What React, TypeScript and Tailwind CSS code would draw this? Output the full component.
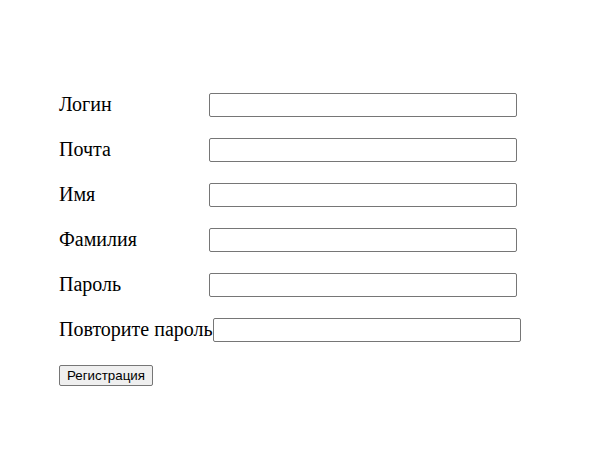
export default function App() {
  const fields = [
    { label: "Логин", type: "text" },
    { label: "Почта", type: "email" },
    { label: "Имя", type: "text" },
    { label: "Фамилия", type: "text" },
    { label: "Пароль", type: "password" },
    { label: "Повторите пароль", type: "password" },
  ];

  return (
    <div className="min-h-[450px] bg-white pl-[59px] pt-[93px] font-['Liberation_Serif',serif] text-black">
      <form className="flex flex-col" onSubmit={(e) => e.preventDefault()}>
        {fields.map((f) => (
          <div key={f.label} className="mb-[21px] flex h-[24px] items-center">
            <label className="min-w-[150px] whitespace-nowrap text-[20px] leading-[24px] -mt-[2px]">
              {f.label}
            </label>
            <input
              type={f.type}
              className="h-[24px] w-[308px] rounded-[2px] border border-[#767676] bg-white px-[2px] text-[13.33px] outline-none"
            />
          </div>
        ))}
        <div>
          <button
            type="submit"
            className="h-[21px] w-[94px] rounded-[2px] border border-[#767676] bg-[#efefef] font-['Liberation_Sans',Arial,sans-serif] text-[13.33px] leading-[19px] text-black"
          >
            Регистрация
          </button>
        </div>
      </form>
    </div>
  );
}
